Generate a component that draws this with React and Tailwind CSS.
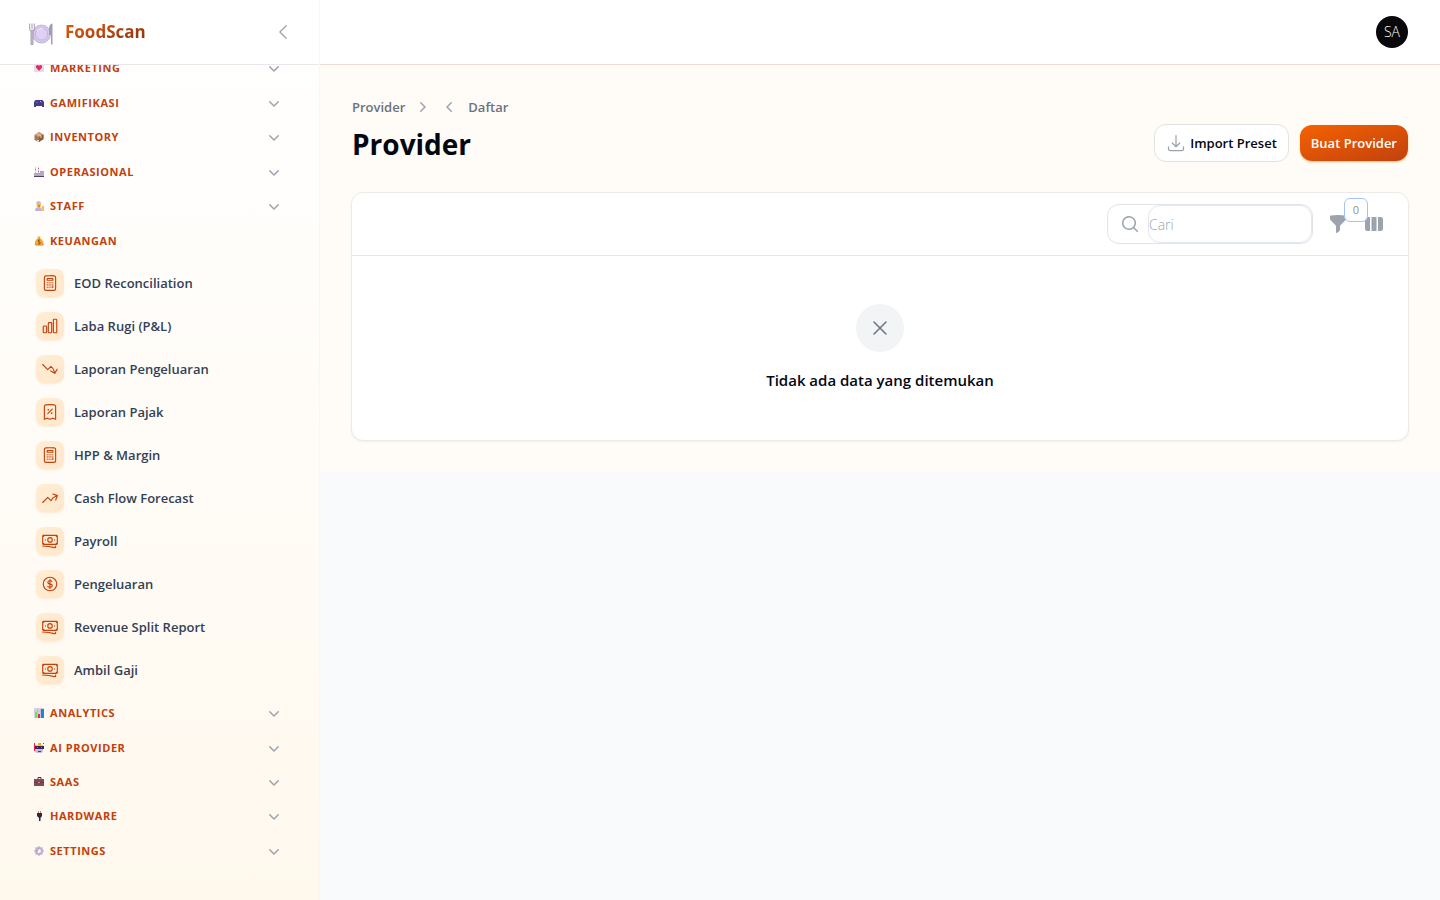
import React from 'react';
import {
  HiOutlineCalculator,
  HiOutlineChartBar,
  HiOutlineArrowTrendingDown,
  HiOutlineArrowTrendingUp,
  HiOutlineReceiptPercent,
  HiOutlineBanknotes,
  HiOutlineCurrencyDollar,
  HiOutlineChevronLeft,
  HiOutlineXMark,
  HiOutlineArrowDownTray,
  HiMiniChevronDown,
  HiMiniChevronLeft,
  HiMiniChevronRight,
  HiMiniFunnel,
  HiMiniMagnifyingGlass,
  HiMiniViewColumns,
} from 'react-icons/hi2';

function Glyph({ name }) {
  const art = {
    marketing: (
      <>
        <rect x="0" y="1" width="10" height="8" rx="1" fill="#e3dcf0" />
        <path d="M5 8 L2 4.6 Q1.6 2 3.6 2 Q4.7 2 5 3 Q5.3 2 6.4 2 Q8.4 2 8 4.6 Z" fill="#f1245c" />
      </>
    ),
    gamifikasi: (
      <>
        <path d="M1.5 2 H8.500 L10 4 V9 H8 V8 H2 V9 H0 V4Z" fill="#4a3a80" />
        <rect x="2" y="4" width="2" height="1" fill="#2b7fd8" />
        <rect x="6" y="3" width="1" height="1" fill="#e8b93c" />
        <rect x="7" y="4" width="1" height="1" fill="#e0406a" />
      </>
    ),
    inventory: (
      <>
        <path d="M0.500 3 L5 0 L9.500 2.500 V7 L5 10 L0.500 8Z" fill="#a87850" />
        <path d="M0.500 3 L5 0 L9.500 2.500 L5 5Z" fill="#cfa276" />
        <path d="M5 5 L9.500 2.500 V7 L5 10Z" fill="#8a5d40" />
        <path d="M3 1.500 L7 4 V6" stroke="#e6c9a8" strokeWidth="1" fill="none" />
        <rect x="3" y="8" width="2" height="1.500" fill="#d9cbea" />
      </>
    ),
    operasional: (
      <>
        <path d="M0 6 H6 V4 H10 V9 H0Z" fill="#b4a9c0" />
        <path d="M1.500 0 V6 M4.500 0 V6" stroke="#d5cbdc" strokeWidth="1" />
        <path d="M1.500 2 V3 M4.500 1 V2 M4.500 4 V5" stroke="#ee4672" strokeWidth="1" />
        <rect x="0" y="9" width="10" height="1" fill="#54405f" />
      </>
    ),
    staff: (
      <>
        <path d="M2 3 Q2 0 5 0 Q7 0 7 3Z" fill="#cbbfe0" />
        <circle cx="4.800" cy="4" r="2.200" fill="#fbb92a" />
        <path d="M1 10 Q1 6 5 6 Q8 6 8 10Z" fill="#bfb0dc" />
        <path d="M4 5 H6" stroke="#e92f52" />
        <path d="M9 5 V10" stroke="#f3a62c" strokeWidth="1.500" />
      </>
    ),
    keuangan: (
      <>
        <path d="M4 2 L3.500 0.500 H6.500 L6 2 Q10 5 9.500 9 H1 Q0 5 4 2Z" fill="#f2a830" />
        <path d="M1 8 Q5 11 9.500 8 V9 Q5 11 1 9Z" fill="#c67a20" />
        <path d="M6 4 H4.500 V6 H6 V8 H4" stroke="#8d551c" fill="none" />
      </>
    ),
    analytics: (
      <>
        <rect x="0" y="0" width="10" height="10" fill="#d8d3e2" />
        <path d="M0 3 H10 M3.500 0 V10 M6.500 0 V10" stroke="#b5aec4" strokeWidth="0.500" />
        <rect x="1" y="4" width="2" height="6" fill="#7bdc54" />
        <rect x="4" y="6" width="2" height="4" fill="#ee2458" />
        <rect x="7" y="1" width="3" height="9" fill="#1787dc" />
      </>
    ),
    ai: (
      <>
        <rect x="0" y="0" width="1" height="8" fill="#f01a55" />
        <rect x="4" y="0" width="3" height="2" fill="#f6a91c" />
        <rect x="9" y="0" width="1" height="1" fill="#f01a55" />
        <path d="M1 2 H9 V8 Q9 10 5 10 Q1 10 1 8Z" fill="#c8bbdd" />
        <rect x="1" y="3" width="9" height="3" fill="#30264f" />
        <path d="M3 4.500 H4 M7 4.500 H8" stroke="#25b3ef" />
        <path d="M4 8.500 H7" stroke="#4c3b60" />
      </>
    ),
    saas: (
      <>
        <path d="M4 2 V0.500 H7 V2" stroke="#4d2f3c" fill="none" />
        <rect x="0" y="2" width="10" height="7" fill="#7e4b56" />
        <rect x="0" y="5" width="10" height="1" fill="#653946" />
        <rect x="4" y="5" width="2" height="1" fill="#e58475" />
      </>
    ),
    hardware: (
      <>
        <path d="M4.500 0 V3 M6.500 0 V3" stroke="#c88b50" />
        <path d="M3 2 H8 V5 L6.500 7 V10 H5 V7 L3 5Z" fill="#322647" />
      </>
    ),
    settings: (
      <>
        <circle cx="5" cy="5" r="3" stroke="#b8abd0" strokeWidth="2" fill="none" />
        <path d="M5 0 V1.500 M5 8.500 V10 M0 5 H1.500 M8.500 5 H10 M1.500 1.500 L2.500 2.500 M7.500 7.500 L8.500 8.500 M8.500 1.500 L7.500 2.500 M1.500 8.500 L2.500 7.500" stroke="#c9bedd" strokeWidth="1.600" />
        <path d="M3 6 Q3 4 5 3.500" stroke="#8f84a8" strokeWidth="0.700" fill="none" />
      </>
    ),
  };
  return (
    <svg viewBox="0 0 10 10" className="size-[10px] shrink-0" aria-hidden="true">
      {art[name]}
    </svg>
  );
}

function Logo() {
  return (
    <svg viewBox="0 0 24 22" className="mt-1 h-[22px] w-6 shrink-0" aria-hidden="true">
      <circle cx="12.500" cy="11" r="9.300" fill="#d3c6ea" />
      <circle cx="12.500" cy="11" r="9" fill="none" stroke="#c2b2df" strokeWidth="0.800" />
      <circle cx="12.500" cy="11" r="6" fill="#dfd0f4" stroke="#c6b3e6" strokeWidth="0.900" />
      <path d="M8 8 Q10 5 14 5.500" stroke="#eee5fa" strokeWidth="1.200" fill="none" />
      <path d="M0.700 0.500 V6 Q0.700 8 2 8 V21.500 H4 V8 Q5.300 8 5.300 6 V0.500 M3 0.500 V6" fill="none" stroke="#a69caf" strokeWidth="1" />
      <path d="M2.500 7 H3.500 V21 H2.500Z" fill="#b9afc2" stroke="#b9afc2" />
      <path d="M23.500 0.500 Q20 1 20 6 V12 H22 V21.500 H23.500Z" fill="#a69caf" />
    </svg>
  );
}

function Group({ name, label, open }) {
  return (
    <li className="flex flex-1">
      <button type="button" aria-expanded={!!open} className="flex flex-1 items-center gap-[6px] text-left">
        <Glyph name={name} />
        <span className="flex-1 text-[11px] leading-4 font-bold tracking-wider text-[#c2410c]">{label}</span>
        {!open && <HiMiniChevronDown className="size-5 text-[#9ca3af]" />}
      </button>
    </li>
  );
}

const upperGroups = [
  ['marketing', 'MARKETING'],
  ['gamifikasi', 'GAMIFIKASI'],
  ['inventory', 'INVENTORY'],
  ['operasional', 'OPERASIONAL'],
  ['staff', 'STAFF'],
  ['keuangan', 'KEUANGAN', true],
];

const lowerGroups = [
  ['analytics', 'ANALYTICS'],
  ['ai', 'AI PROVIDER'],
  ['saas', 'SAAS'],
  ['hardware', 'HARDWARE'],
  ['settings', 'SETTINGS'],
];

const items = [
  [HiOutlineCalculator, 'EOD Reconciliation'],
  [HiOutlineChartBar, 'Laba Rugi (P&L)'],
  [HiOutlineArrowTrendingDown, 'Laporan Pengeluaran'],
  [HiOutlineReceiptPercent, 'Laporan Pajak'],
  [HiOutlineCalculator, 'HPP & Margin'],
  [HiOutlineArrowTrendingUp, 'Cash Flow Forecast'],
  [HiOutlineBanknotes, 'Payroll'],
  [HiOutlineCurrencyDollar, 'Pengeluaran'],
  [HiOutlineBanknotes, 'Revenue Split Report'],
  [HiOutlineBanknotes, 'Ambil Gaji'],
];

function Sidebar() {
  return (
    <aside className="flex w-80 shrink-0 flex-col overflow-hidden border-r border-[#fdf6ee] bg-linear-to-b from-white via-[#fffcf7] to-[#fff8ed]">
      <div className="z-10 flex h-[65px] shrink-0 items-center border-b border-[#e8e8ea] bg-white pr-[26px] pl-[29px]">
        <Logo />
        <a href="#" className="ml-3 bg-linear-to-br from-[#f56200] to-[#7c2d12] bg-clip-text text-[17px] leading-7 font-bold text-transparent">
          FoodScan
        </a>
        <button type="button" aria-label="Tutup sidebar" className="ml-auto text-[#9ca3af]">
          <HiOutlineChevronLeft className="size-5" />
        </button>
      </div>
      <nav className="-mt-[14px] pr-[35px] pl-[34px]">
        <ul className="flex h-[207px] flex-col">
          {upperGroups.map(([n, l, o]) => <Group key={n} name={n} label={l} open={o} />)}
        </ul>
        <ul className="mt-[11px] flex flex-col gap-[15px] pl-0.5">
          {items.map(([Icon, label]) => (
            <li key={label}>
              <a href="#" className="flex h-7 items-center gap-[10px]">
                <span className="flex size-7 items-center justify-center rounded-lg bg-linear-to-br from-[#ffedd5] to-[#ffe8cc] text-[#c2410c] shadow-xs shadow-orange-200/50">
                  <Icon className="size-[18px]" />
                </span>
                <span className="text-[13px] leading-5 font-semibold text-[#334155]">{label}</span>
              </a>
            </li>
          ))}
        </ul>
        <ul className="mt-3 flex h-[172px] flex-col">
          {lowerGroups.map(([n, l]) => <Group key={n} name={n} label={l} />)}
        </ul>
      </nav>
    </aside>
  );
}

export default function App() {
  return (
    <div className="flex h-screen overflow-hidden bg-[#f9fafb] font-['Open_Sans','Noto_Sans',sans-serif] text-[#030712]">
      <Sidebar />
      <div className="min-w-0 flex-1">
        <header className="flex h-[65px] items-center justify-end border-b border-[#eedbd3] bg-white px-8">
          <button type="button" aria-label="Menu pengguna" className="mb-px size-8 rounded-full bg-[#09090b] text-[14px] leading-5 font-light text-white">
            SA
          </button>
        </header>
        <main className="bg-[#fffcf7] px-8 pt-8 pb-[31px]">
          <div className="flex items-end justify-between">
            <div>
              <nav aria-label="Breadcrumb" className="flex h-5 items-center text-[13px] leading-5 font-semibold text-[#6b7280]">
                <a href="#">Provider</a>
                <HiMiniChevronRight className="ml-[7px] size-5 text-[#9ca3af]" />
                <HiMiniChevronLeft className="mr-2 ml-2 size-5 text-[#9ca3af]" />
                <a href="#">Daftar</a>
              </nav>
              <h1 className="mt-[9px] text-[28px] leading-9 font-bold">Provider</h1>
            </div>
            <div className="flex items-center gap-[11px]">
              <button type="button" className="flex h-[38px] items-center gap-1 rounded-xl border border-[#e2e2e2] bg-white px-[11px] text-[13px] leading-5 font-semibold">
                <HiOutlineArrowDownTray className="size-5 text-[#9ca3af]" />
                Import Preset
              </button>
              <button type="button" className="h-9 rounded-xl bg-linear-to-br from-[#f56200] to-[#c2410c] px-[11px] text-[13px] leading-5 font-semibold text-white shadow-xs shadow-orange-300">
                Buat Provider
              </button>
            </div>
          </div>
          <section className="-mx-px mt-[30px] rounded-xl border border-[#edebe7] bg-white shadow-xs">
            <div className="flex h-[63px] items-center justify-end border-b border-[#e5e7eb] pr-6">
              <label className="flex h-10 w-[206px] items-center rounded-xl border border-[#e0e3e7] bg-white">
                <HiMiniMagnifyingGlass className="mr-2 ml-3 size-5 shrink-0 text-[#9ca3af]" />
                <input
                  type="search"
                  aria-label="Cari"
                  placeholder="Cari"
                  className="h-[38px] min-w-0 flex-1 rounded-xl border border-[#e2e8f0] bg-transparent text-[14px] leading-6 font-light placeholder:text-[#9ca3af]"
                />
              </label>
              <button type="button" aria-label="Filter" className="relative ml-[15px] text-[#9ca3af]">
                <HiMiniFunnel className="size-5" />
                <span className="absolute -top-4 left-4 z-10 flex size-6 items-center justify-center rounded-md border border-[#a3c4fb] bg-white text-[11px] leading-4 text-[#8b93a1]">
                  0
                </span>
              </button>
              <button type="button" aria-label="Kolom" className="ml-4 text-[#9ca3af]">
                <HiMiniViewColumns className="size-5" />
              </button>
            </div>
            <div className="flex flex-col items-center px-6 py-12">
              <div className="flex size-12 items-center justify-center rounded-full bg-[#f3f4f6] text-[#6b7280]">
                <HiOutlineXMark className="size-6" />
              </div>
              <h4 className="mt-4 text-[15px] leading-6 font-semibold">Tidak ada data yang ditemukan</h4>
            </div>
          </section>
        </main>
      </div>
    </div>
  );
}
